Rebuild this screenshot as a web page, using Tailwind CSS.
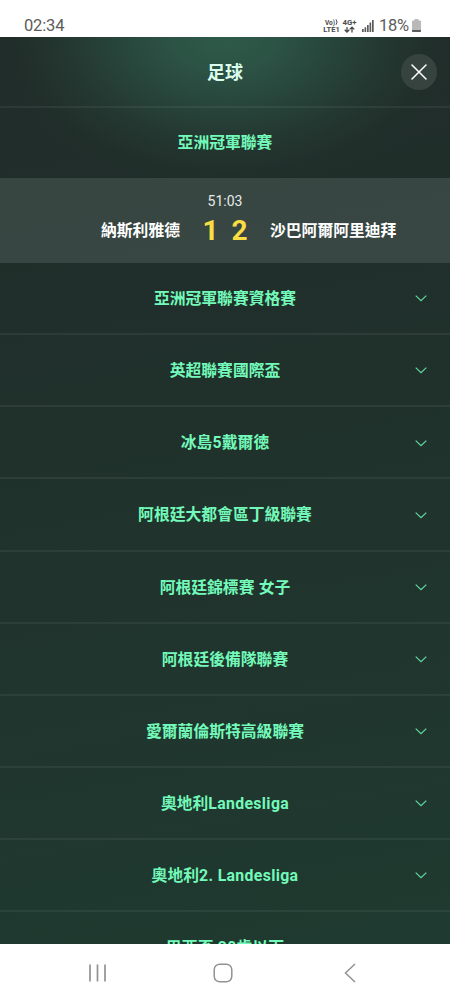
<!DOCTYPE html>
<html lang="zh-Hant">
<head>
<meta charset="utf-8">
<meta name="viewport" content="width=device-width, initial-scale=1">
<title>足球</title>
<script src="https://cdn.jsdelivr.net/npm/@tailwindcss/browser@4"></script>
</head>
<body class="bg-white font-[Roboto,'Noto_Sans_CJK_TC',sans-serif]">
<div class="flex h-[1000px] w-[450px] flex-col overflow-hidden">
  <!-- status bar -->
  <div class="flex h-[37px] shrink-0 items-start justify-between pt-[15px] pr-[29px] pl-[24px] text-[#5c5c5c]">
    <span class="text-[16.5px] leading-[22px] tracking-[-0.15px]">02:34</span>
    <div class="flex items-start">
      <svg class="mt-[3px] mr-[5px] h-[16px] w-[34px]" viewBox="0 0 34 16" fill="none" stroke="#4a4a4a">
        <g fill="#4a4a4a" stroke="none" font-family="Roboto" font-weight="700" font-size="7.5">
          <text x="2" y="7" textLength="10" lengthAdjust="spacingAndGlyphs">Vo)</text>
          <text x="0.3" y="14.300" textLength="16.5" lengthAdjust="spacingAndGlyphs">LTE1</text>
          <text x="19.500" y="7" textLength="14" lengthAdjust="spacingAndGlyphs">4G+</text>
        </g>
        <path d="M13 1.4q2.2 2.6 0 5.4" stroke-width="1"/>
        <path d="M24 9v4.8M21.7 11.7l2.3 2.3 2.3-2.3M29 14.4V9.5M26.7 11.4l2.3-2.3 2.3 2.3" stroke-width="1.3"/>
      </svg>
      <svg class="mt-[4px] mr-[5px] h-[14px] w-[12px]" viewBox="0 0 12 14" fill="#5c5c5c">
        <path d="M0 10h1.7v3H0zM2.5 8.300h1.700v4.700H2.500zM5 6h1.700v7H5zM7.500 3.500h1.700v9.500H7.500zM10 1h1.700v12H10z"/>
      </svg>
      <span class="w-[33px] text-[16.5px] leading-[22px] tracking-[-0.3px] whitespace-nowrap">18%</span>
      <svg class="mt-[4px] h-[13px] w-[9px]" viewBox="0 0 9 13">
        <path d="M2.500 0h4v1.500H8q1 0 1 1V12q0 1-1 1H1q-1 0-1-1V2.500q0-1 1-1h1.500z" fill="#b9b9b9"/>
        <path d="M0 11h9v1q0 1-1 1H1q-1 0-1-1z" fill="#5c5c5c"/>
      </svg>
    </div>
  </div>

  <!-- sheet -->
  <main class="flex h-[907px] shrink-0 flex-col overflow-hidden bg-[radial-gradient(ellipse_240px_155px_at_50%_0,#2e5a49_0%,#2c5345_22%,#294b3fdd_42%,#27423877_68%,#23352e22_88%,#23352e00_100%),linear-gradient(170deg,#212c29_0%,#202f2b_30%,#20342d_60%,#1f3a30_100%)] text-[15.8px] font-bold text-[#73f9b9]">
    <header class="grid h-[71px] shrink-0 grid-cols-[1fr_auto_1fr] items-center border-b-2 border-white/6 px-[13px] pt-px text-[18px] text-[#dcfdec]">
      <span></span>
      <h1>足球</h1>
      <button class="flex size-[36px] items-center justify-center justify-self-end rounded-full bg-[#37433f]">
        <svg class="size-[16px]" viewBox="0 0 16 16" stroke="#fff" stroke-width="1.500" stroke-linecap="round"><path d="M1 1l14 14M15 1L1 15"/></svg>
      </button>
    </header>
    <div class="flex h-[70px] shrink-0 items-center justify-center">亞洲冠軍聯賽</div>

    <section class="flex h-[85px] shrink-0 flex-col bg-[#8f9f9b]/22 pt-[14px] text-white">
      <div class="text-center text-[14px] leading-[18px] font-normal text-[#e6ebe9]">51:03</div>
      <div class="grid h-[42px] grid-cols-[180px_90px_180px] items-center">
        <span class="text-right">納斯利雅德</span>
        <div class="flex justify-center gap-[13px] text-[28px] leading-[40px] text-[#fbdc43]"><span>1</span><span>2</span></div>
        <span>沙巴阿爾阿里迪拜</span>
      </div>
    </section>

    <ul id="leagues" class="shrink-0"></ul>
  </main>

  <!-- navigation bar -->
  <nav class="flex h-[56px] shrink-0 items-center pb-px pl-[88px] pt-[3px]">
    <svg class="h-[20px] w-[19px]" viewBox="0 0 19 20" stroke="#929292" stroke-width="1.700"><path d="M2 1.500v17M9.500 1.500v17M17 1.500v17"/></svg>
    <svg class="ml-[106px] size-[20px]" viewBox="0 0 20 20" fill="none" stroke="#929292" stroke-width="1.500"><rect x="1.200" y="1.200" width="17.600" height="17.600" rx="5.500"/></svg>
    <svg class="ml-[110px] h-[20px] w-[14px]" viewBox="0 0 14 20" fill="none" stroke="#929292" stroke-width="1.500"><path d="M12 1L2.500 10l9.500 9"/></svg>
  </nav>
</div>
<script>
const names = ['亞洲冠軍聯賽資格賽', '英超聯賽國際盃', '冰島5戴爾徳', '阿根廷大都會區丁級聯賽', '阿根廷錦標賽 女子', '阿根廷後備隊聯賽', '愛爾蘭倫斯特高級聯賽', '奧地利Landesliga', '奧地利2. Landesliga', '巴西盃 20歲以下'];
const label = n => n.replace(/[\x20-\x7e]+/g, t => `<span class="tracking-[0.35px]">${t}</span>`);
document.getElementById('leagues').innerHTML = names.map(n => `
  <li class="grid h-[72.150px] grid-cols-[1fr_auto_1fr] items-center border-b-2 border-white/6 px-[23px] pt-[1.500px]">
    <span></span><span class="whitespace-pre">${label(n)}</span>
    <svg class="h-[7px] w-[12px] justify-self-end" viewBox="0 0 12 7" fill="none" stroke="#62d9a2" stroke-width="1.200"><path d="M0.700 0.600L6 5.700l5.300-5.100"/></svg>
  </li>`).join('');
</script>
</body>
</html>
